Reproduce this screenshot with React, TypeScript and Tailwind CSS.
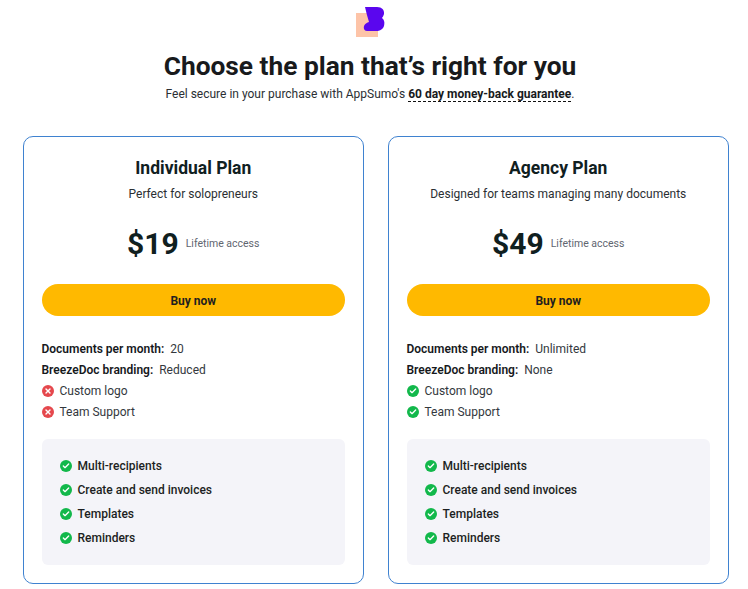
import { Check, X } from 'lucide-react';

const FEATURES = ['Multi-recipients', 'Create and send invoices', 'Templates', 'Reminders'];

const PLANS = [
  {
    name: 'Individual Plan',
    tagline: 'Perfect for solopreneurs',
    price: '$19',
    documents: '20',
    branding: 'Reduced',
    included: false,
  },
  {
    name: 'Agency Plan',
    tagline: 'Designed for teams managing many documents',
    price: '$49',
    documents: 'Unlimited',
    branding: 'None',
    included: true,
  },
];

function StatusIcon({ ok }: { ok: boolean }) {
  return (
    <span
      className={`flex h-3 w-3 shrink-0 items-center justify-center rounded-full ${
        ok ? 'bg-[#12b84b]' : 'bg-[#e5484d]'
      }`}
    >
      {ok ? (
        <Check className="h-2 w-2 text-white" strokeWidth={4} />
      ) : (
        <X className="h-2 w-2 text-white" strokeWidth={4} />
      )}
    </span>
  );
}

function PlanCard({ plan }: { plan: (typeof PLANS)[number] }) {
  return (
    <div className="flex h-[448px] flex-col rounded-[10px] border border-[#3f82d0] pr-[18px] pl-[17.5px] pt-[19px]">
      <h2 className="text-center text-[17.5px] leading-[24px] font-bold text-[#10201f]">{plan.name}</h2>
      <p className="mt-[5px] text-center text-[12px] leading-[18px] text-[#2b2f33]">{plan.tagline}</p>

      <div className="mt-[21px] flex items-center justify-center gap-[7px]">
        <span className="text-[30px] leading-[40px] font-bold text-[#10201f]">{plan.price}</span>
        <span className="text-[10.5px] leading-[16px] text-[#5f6670]">Lifetime access</span>
      </div>

      <button className="mt-[20px] h-[32px] w-full rounded-full bg-[#ffb900] pt-[1px] text-[12px] font-bold text-[#1f1f1f]">
        Buy now
      </button>

      <ul className="mt-[24px] flex flex-col gap-[3px] text-[12px] leading-[18px] text-[#33383d]">
        <li>
          <span className="mr-[6px] font-semibold text-[#16191c]">Documents per month:</span>
          {plan.documents}
        </li>
        <li>
          <span className="mr-[6px] font-semibold text-[#16191c]">BreezeDoc branding:</span>
          {plan.branding}
        </li>
        <li className="flex items-center gap-[6px]">
          <StatusIcon ok={plan.included} />
          Custom logo
        </li>
        <li className="flex items-center gap-[6px]">
          <StatusIcon ok={plan.included} />
          Team Support
        </li>
      </ul>

      <ul className="mt-[18px] flex h-[126px] flex-col justify-center gap-[6px] rounded-[6px] bg-[#f4f4f9] pl-[18px] text-[12px] leading-[18px] font-medium text-[#1c1f22]">
        {FEATURES.map((feature) => (
          <li key={feature} className="flex items-center gap-[6px]">
            <StatusIcon ok />
            {feature}
          </li>
        ))}
      </ul>
    </div>
  );
}

export default function App() {
  return (
    <div className="h-[589px] w-[748px] overflow-hidden bg-white font-['Roboto',sans-serif]">
      <header className="flex w-[740px] flex-col items-center pt-[6px]">
        <svg width="30" height="31" viewBox="0 0 30 31" aria-hidden="true">
          <rect x="1" y="7" width="22" height="24" fill="#fdc4a8" />
          <path
            d="M10 1 H22 C27 1 29.5 4 29 8 C28.5 10 27.5 11 27 12 C29 13.5 29.8 16 29.2 19 C28.5 23 25 25 21 25 H12 C9 25 8 21.5 9.5 19 C10.5 17.5 12 16.5 14 16 C12.5 11 11 6 10 1 Z"
            fill="#5a06ee"
          />
        </svg>
        <h1 className="mt-[11px] text-[26.3px] leading-[36px] font-bold text-[#181a1c]">
          Choose the plan that’s right for you
        </h1>
        <p className="mt-[1px] text-[12px] leading-[18px] text-[#2b2f33]">
          Feel secure in your purchase with AppSumo's{' '}
          <span className="border-b border-dashed border-[#111] font-bold text-[#181a1c]">
            60 day money-back guarantee
          </span>
          .
        </p>
      </header>

      <div className="mt-[33px] grid grid-cols-[341px_341px] gap-[24px] pl-[23px]">
        {PLANS.map((plan) => (
          <PlanCard key={plan.name} plan={plan} />
        ))}
      </div>
    </div>
  );
}
